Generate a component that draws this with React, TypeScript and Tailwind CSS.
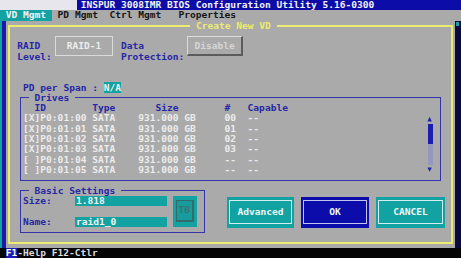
const blue = "text-[#2626a6]";

const drives = [
  ["[X]P0:01:00", "00"],
  ["[X]P0:01:01", "01"],
  ["[X]P0:01:02", "02"],
  ["[X]P0:01:03", "03"],
  ["[ ]P0:01:04", "--"],
  ["[ ]P0:01:05", "--"],
];

function ActionButton({ label, ok, width }: { label: string; ok?: boolean; width: string }) {
  return (
    <div
      className={`${width} h-[31px] mt-[11.04px] pt-[3px] pb-[4px] px-[2px] ${
        ok ? "bg-[#0c0caa]" : "bg-[#12a2a2]"
      }`}
    >
      <div
        className={`h-full border flex items-center justify-center text-[#eef6f6] ${
          ok ? "border-[#c4c4ee]" : "border-[#d2eeee]"
        }`}
      >
        {label}
      </div>
    </div>
  );
}

export default function App() {
  return (
    <div className="w-[461px] h-[258px] overflow-hidden flex flex-col bg-[#aaaaaa] font-['DejaVu_Sans_Mono','Liberation_Mono',monospace] text-[9.57px] leading-[10.32px] font-bold">
      {/* title bar */}
      <div className="h-[10.32px] shrink-0 flex">
        <div className="w-[77px] bg-[#e6e6ec]" />
        <div className="flex-1 bg-[#0c0ca8] pl-[3.67px] text-[#f2f2f2] whitespace-pre">
          INSPUR 3008IMR BIOS Configuration Utility 5.16-0300
        </div>
      </div>

      {/* menu */}
      <div className="h-[10.32px] shrink-0 flex text-[#161616] whitespace-pre">
        <div className="w-[51.86px] bg-[#12a2a2] text-[#f2f2f2]"> VD Mgmt </div>
        <div> PD Mgmt  Ctrl Mgmt   Properties</div>
      </div>

      <div className="h-[227.04px] shrink-0 flex">
        <div className="w-[5.76px] flex">
          <div className="w-[2px] bg-[#12a2a2]" />
          <div className="flex-1 bg-[#1a1aa8]" />
        </div>

        {/* dialog */}
        <div className="w-[449.48px] px-[2px] pb-[3.9px]">
          <fieldset className="h-[223.14px] border-2 border-[#ecec70]">
            <legend className="ml-[180.4px] text-[#ecec70] whitespace-pre"> Create New VD </legend>

            {/* raid level / protection */}
            <div className="h-[30.96px] flex items-start">
              <div className={`ml-[7.58px] w-[37.72px] mt-[10.32px] ${blue}`}>
                RAID
                <br />
                Level:
              </div>
              <div className="w-[58px] h-[20px] mt-[5.5px] border-[1.5px] border-[#dadada] flex items-center justify-center text-[#ececec]">
                RAID-1
              </div>
              <div className={`ml-[7.96px] w-[66.04px] mt-[10.32px] ${blue}`}>
                Data
                <br />
                Protection:
              </div>
              <div className="w-[56px] h-[20px] mt-[5.5px] border border-[#dcdcdc] border-r-2 border-b-2 border-r-[#5c5c5c] border-b-[#5c5c5c] flex items-center justify-center text-[#d6d6d6]">
                Disable
              </div>
            </div>

            <div className="h-[20.64px]" />

            <div className={`h-[10.32px] pl-[13.34px] whitespace-pre ${blue}`}>
              PD per Span : <span className="bg-[#12a2a2] text-[#f2f2f2]">N/A</span>
            </div>

            {/* drives */}
            <div className="h-[92.88px]">
              <fieldset className="mx-[10px] border border-[#3434a8] pb-[4.54px]">
                <legend className={`ml-[8.1px] whitespace-pre ${blue}`}> Drives </legend>
                <div className="flex pl-[2.34px]">
                  <div className="w-[403.2px] whitespace-pre">
                    <div className={blue}>  ID        Type       Size        #   Capable</div>
                    {drives.map(([id, n]) => (
                      <div key={id} className="text-[#ececec]">
                        {`${id} SATA    931.000 GB     ${n}  --`}
                      </div>
                    ))}
                  </div>
                  <div className="w-[5.76px] pt-[10.32px] flex flex-col">
                    <svg width="6" height="10.32" viewBox="0 0 6 10.32" className="block">
                      <polygon points="1.4,8.4 5.9,8.4 3.65,3.8" fill="#2222b0" />
                    </svg>
                    <div className="h-[20.64px] ml-[1.5px] w-[5px] bg-[#1c1cb0]" />
                    <div className="h-[20.64px] ml-[2px] w-[4.4px] bg-[#9696c0]" />
                    <svg width="6" height="10.32" viewBox="0 0 6 10.32" className="block">
                      <polygon points="1.4,2.4 5.9,2.4 3.65,6.8" fill="#2222b0" />
                    </svg>
                  </div>
                </div>
              </fieldset>
            </div>

            {/* basic settings + buttons */}
            <div className="h-[51.6px] flex items-start">
              <fieldset className="ml-[10px] w-[185.3px] border border-[#3434a8] pb-[4.66px]">
                <legend className={`ml-[8.1px] whitespace-pre ${blue}`}> Basic Settings </legend>
                <div className="flex">
                  <div className={`pl-[2.34px] w-[54.18px] ${blue}`}>
                    <div>Size:</div>
                    <div className="h-[10.32px]" />
                    <div>Name:</div>
                  </div>
                  <div className="w-[92.16px] text-[#f2f2f2]">
                    <div className="h-[10.32px] bg-[#12a2a2] pl-[1px]">1.818</div>
                    <div className="h-[10.32px]" />
                    <div className="h-[10.32px] bg-[#12a2a2] pl-[1px]">raid1_0</div>
                  </div>
                  <div className="w-[5.76px]" />
                  <div className="w-[24px] h-[30.96px] bg-[#12a2a2] pt-[4px] pb-[5px] px-[3px]">
                    <div className="h-full border border-[#356a6a] border-r-2 border-b-2 bg-[#169c9c] flex items-center justify-center text-[#3c7272]">
                      TB
                    </div>
                  </div>
                </div>
              </fieldset>
              <div className="ml-[22px]">
                <ActionButton label="Advanced" width="w-[67px]" />
              </div>
              <div className="ml-[7px]">
                <ActionButton label="OK" ok width="w-[68px]" />
              </div>
              <div className="ml-[7px]">
                <ActionButton label="CANCEL" width="w-[69px]" />
              </div>
            </div>
          </fieldset>
        </div>

        <div className="flex-1 bg-[#0a0a3e] pt-[1.5px] pl-[1px]">
          <div className="w-[3px] h-[4px] bg-[#12a2a2]" />
        </div>
      </div>

      {/* status bar */}
      <div className="h-[10.32px] shrink-0 bg-[#050505] flex whitespace-pre text-[#dcdcdc]">
        <div className="w-[5.76px]" />
        <div className="bg-[#1c1cb4] text-white">F1</div>
        <div>-Help F12-Ctlr</div>
      </div>
    </div>
  );
}
